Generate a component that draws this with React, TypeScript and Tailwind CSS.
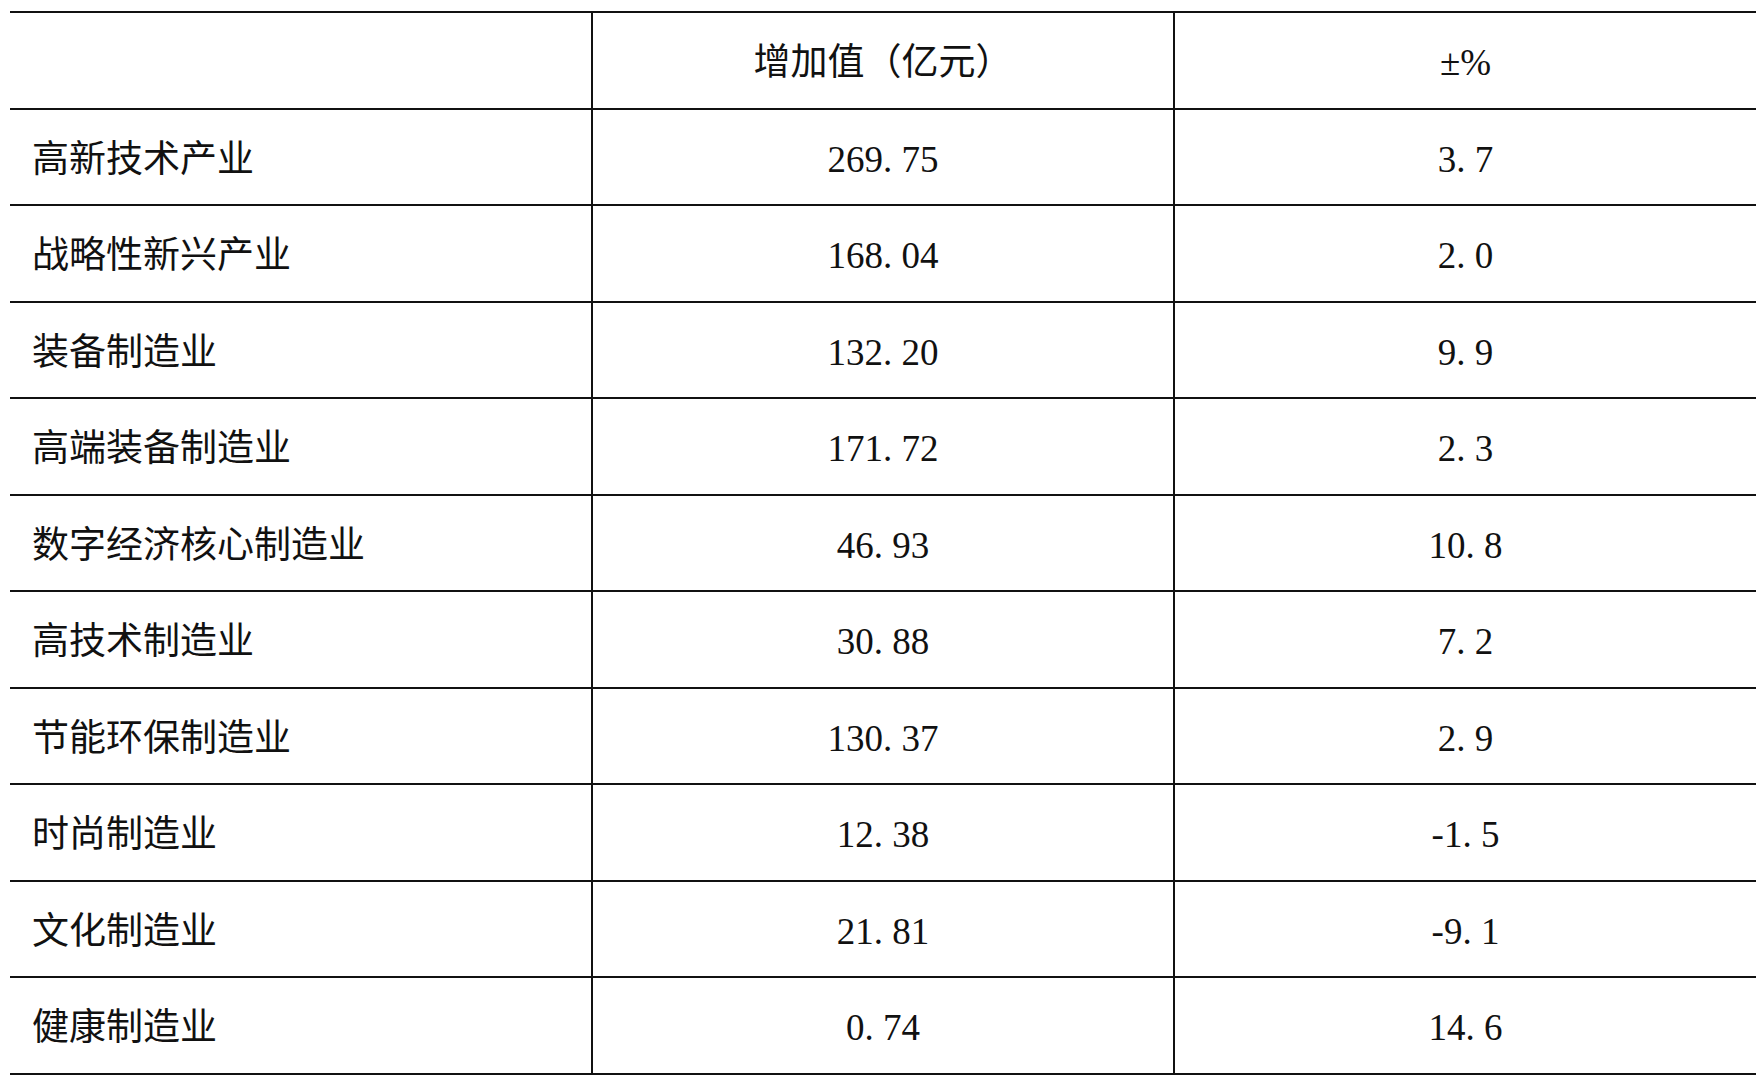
const rows: [string, string, string][] = [
  ["高新技术产业", "269.75", "3.7"],
  ["战略性新兴产业", "168.04", "2.0"],
  ["装备制造业", "132.20", "9.9"],
  ["高端装备制造业", "171.72", "2.3"],
  ["数字经济核心制造业", "46.93", "10.8"],
  ["高技术制造业", "30.88", "7.2"],
  ["节能环保制造业", "130.37", "2.9"],
  ["时尚制造业", "12.38", "-1.5"],
  ["文化制造业", "21.81", "-9.1"],
  ["健康制造业", "0.74", "14.6"],
];

// the source font gives the decimal point a half-width cell
function Num({ value }: { value: string }) {
  const [whole, frac] = value.split(".");
  return (
    <span>
      {whole}.<span className="ml-[0.25em]">{frac}</span>
    </span>
  );
}

function Row({ index, cells }: { index: number; cells: React.ReactNode[] }) {
  return (
    <div
      className={
        "grid grid-cols-[581px_582px_583px] border-b-2 border-[#111] " +
        (index % 2 === 0 ? "h-[97px]" : "h-[96px]")
      }
    >
      <div className="flex items-center pl-[22px] pt-[4px]">{cells[0]}</div>
      <div className="flex items-center justify-center border-l-2 border-[#111] pt-[4px]">{cells[1]}</div>
      <div className="flex items-center justify-center border-l-2 border-[#111] pt-[4px]">{cells[2]}</div>
    </div>
  );
}

export default function App() {
  return (
    <div className="min-h-screen bg-white pt-[11px] pl-[10px]">
      <div
        className="w-[1746px] border-t-2 border-[#111] text-[37px] leading-none text-[#111]"
        style={{ fontFamily: "'Liberation Serif', 'Noto Sans CJK SC', serif" }}
      >
        <Row index={0} cells={["", "增加值（亿元）", "±%"]} />
        {rows.map((r, i) => (
          <Row
            key={r[0]}
            index={i + 1}
            cells={[r[0], <Num value={r[1]} />, <Num value={r[2]} />]}
          />
        ))}
      </div>
    </div>
  );
}
